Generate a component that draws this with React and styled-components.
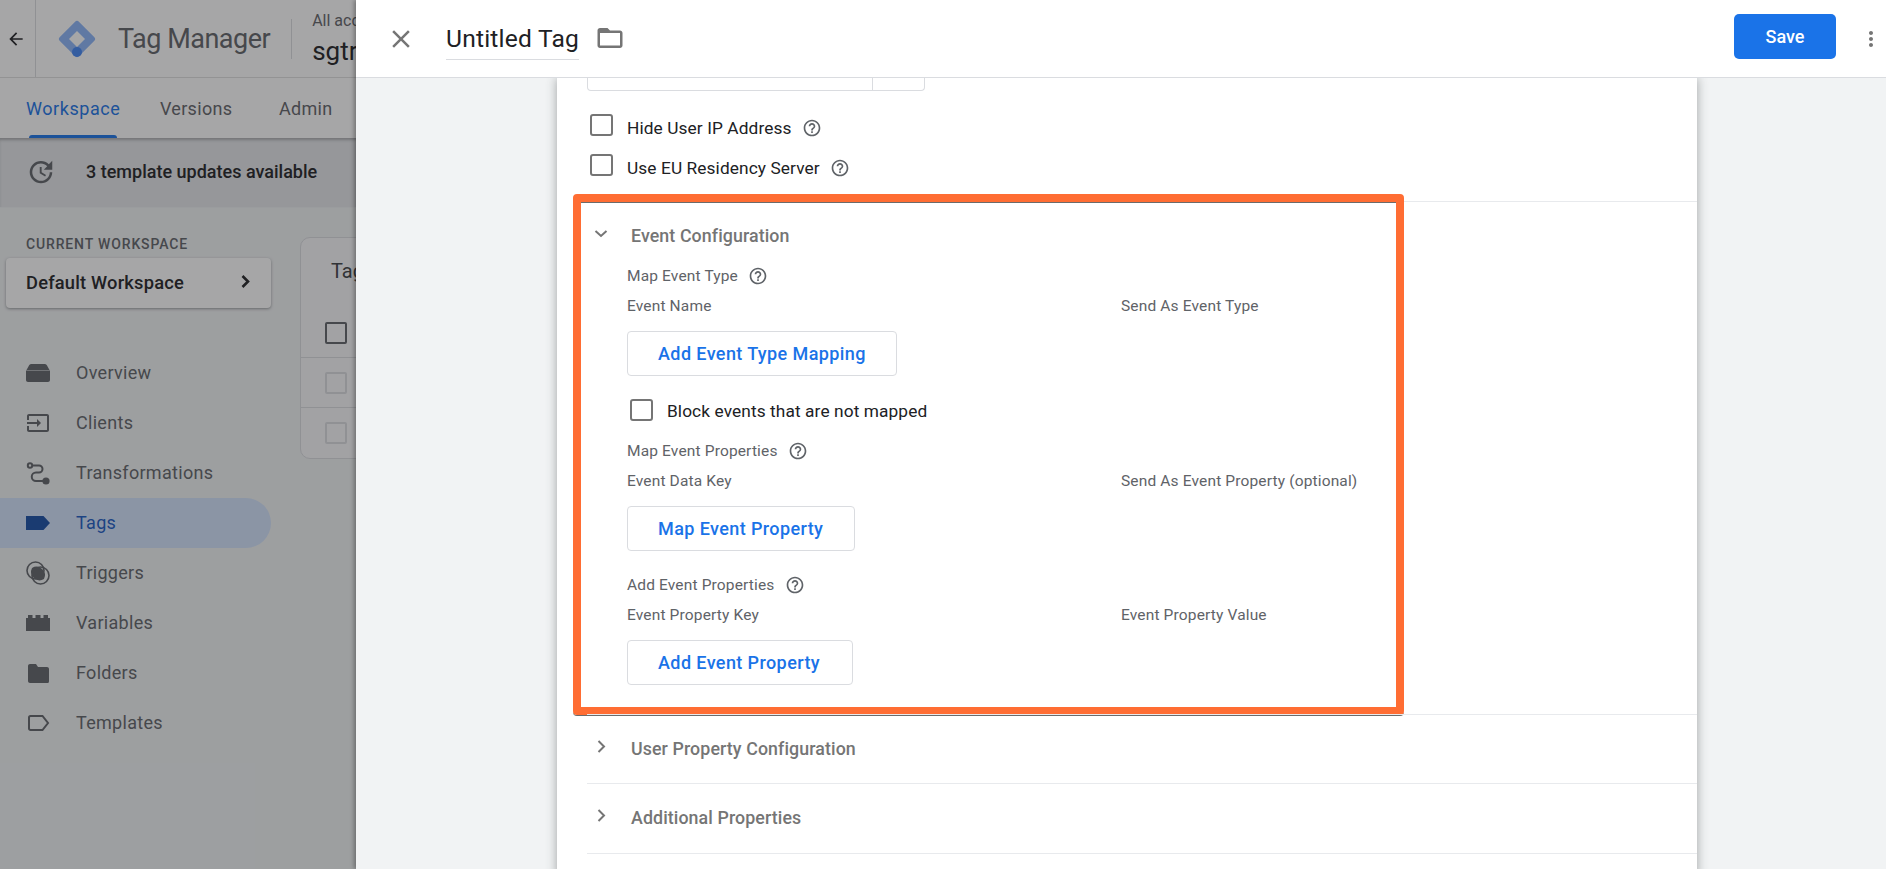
import React from "react";
import styled, { createGlobalStyle } from "styled-components";

const Global = createGlobalStyle`
  html, body { margin: 0; padding: 0; height: 100%; overflow: hidden; background: #fff; }
  body { font-family: Roboto, "Liberation Sans", sans-serif; color: #202124; }
  #root { height: 869px; }
  * { box-sizing: border-box; }
`;

const Shell = styled.div`
  display: flex;
  width: 1886px;
  height: 869px;
  overflow: hidden;
`;

/* ---------- background page ---------- */
const Page = styled.div`
  position: relative;
  flex: 0 0 356px;
  height: 869px;
  overflow: hidden;
  display: flex;
  flex-direction: column;
  background: #f1f3f4;
`;
const Scrim = styled.div`
  position: absolute;
  inset: 0;
  background: rgba(32, 33, 36, 0.4);
  z-index: 5;
`;
const AppBar = styled.div`
  flex: 0 0 78px;
  display: flex;
  align-items: center;
  background: #fff;
  border-bottom: 1px solid #e0e0e0;
  white-space: nowrap;
`;
const BackCell = styled.div`
  flex: 0 0 36px;
  height: 100%;
  display: flex;
  align-items: center;
  justify-content: center;
  border-right: 1px solid #dadce0;
  padding-right: 3px;
  color: #202124;
`;
const Logo = styled.svg`
  width: 38px;
  height: 38px;
  margin-left: 22px;
  flex: none;
`;
const Product = styled.div`
  margin-left: 22px;
  font-size: 27px;
  letter-spacing: -0.5px;
  color: #5f6368;
`;
const BarDivider = styled.div`
  flex: none;
  width: 1px;
  height: 40px;
  margin-left: 21px;
  background: #dadce0;
`;
const Crumbs = styled.div`
  margin-left: 20px;
  display: flex;
  flex-direction: column;
  gap: 6px;
`;
const CrumbTop = styled.div`
  font-size: 16px;
  line-height: 18px;
  color: #5f6368;
`;
const CrumbMain = styled.div`
  font-size: 26px;
  line-height: 30px;
  color: #202124;
`;
const Tabs = styled.div`
  flex: 0 0 60px;
  display: flex;
  align-items: stretch;
  padding-left: 26px;
  background: #fff;
  white-space: nowrap;
`;
const Tab = styled.div`
  position: relative;
  flex: 0 0 ${(p) => p.$w}px;
  display: flex;
  align-items: center;
  font-size: 18px;
  letter-spacing: ${(p) => (p.$active ? 0.55 : 0.3)}px;
  color: ${(p) => (p.$active ? "#1a73e8" : "#5f6368")};
  ${(p) =>
    p.$active &&
    `&::after { content: ""; position: absolute; left: 3px; width: 88px; bottom: 0; height: 3px; border-radius: 3px 3px 0 0; background: #1a73e8; }`}
`;
const Banner = styled.div`
  flex: 0 0 70px;
  display: flex;
  align-items: center;
  padding: 0 0 2px 26px;
  background: #e4e6e9;
  box-shadow: inset 0 3px 3px -1px rgba(60, 64, 67, 0.35);
  border-bottom: 1px solid #eceff1;
  font-size: 18px;
  font-weight: 500;
  color: #202124;
  white-space: nowrap;
  svg { color: #5f6368; margin-right: 30px; flex: none; }
`;
const Main = styled.div`
  flex: 1;
  display: flex;
  min-height: 0;
`;
const Side = styled.div`
  flex: 0 0 300px;
  display: flex;
  flex-direction: column;
  padding-top: 28px;
`;
const SideCaption = styled.div`
  padding-left: 26px;
  font-size: 14px;
  line-height: 16px;
  font-weight: 500;
  letter-spacing: 0.85px;
  color: #5f6368;
`;
const WorkspaceCard = styled.div`
  margin: 6px 29px 0 6px;
  height: 50px;
  display: flex;
  align-items: center;
  justify-content: space-between;
  padding: 0 16px 2px 20px;
  background: #fff;
  border-radius: 4px;
  box-shadow: 0 1px 3px rgba(60, 64, 67, 0.5);
  font-size: 18.3px;
  font-weight: 500;
  letter-spacing: 0.2px;
  color: #202124;
`;
const Nav = styled.div`
  margin-top: 40px;
  display: flex;
  flex-direction: column;
`;
const NavRow = styled.div`
  width: 271px;
  height: 50px;
  display: flex;
  align-items: center;
  padding: 0 0 1px 26px;
  font-size: 18px;
  letter-spacing: 0.3px;
  color: ${(p) => (p.$active ? "#1a5bc4" : "#5f6368")};
  background: ${(p) => (p.$active ? "#d2e3fc" : "transparent")};
  border-radius: ${(p) => (p.$active ? "0 25px 25px 0" : "0")};
  svg { flex: none; margin-right: 26px; color: ${(p) => (p.$active ? "#174ea6" : "#5f6368")}; }
`;
const TableCard = styled.div`
  flex: none;
  width: 400px;
  height: 222px;
  margin-top: 29px;
  background: #f8f9fa;
  border: 1px solid #dadce0;
  border-radius: 10px;
`;
const TableTitle = styled.div`
  height: 70px;
  padding: 20px 0 0 30px;
  font-size: 20px;
  line-height: 26px;
  color: #3c4043;
`;
const TableRow = styled.div`
  height: 50px;
  display: flex;
  align-items: center;
  padding-left: 24px;
  border-bottom: ${(p) => (p.$last ? "none" : "1px solid #dadce0")};
`;
const TableBox = styled.div`
  width: 22px;
  height: 22px;
  border-radius: 2px;
  border: 2px solid ${(p) => (p.$strong ? "#5f6368" : "#dadce0")};
`;

/* ---------- tag editor panel ---------- */
const Panel = styled.div`
  position: relative;
  z-index: 6;
  flex: 1;
  height: 869px;
  display: flex;
  flex-direction: column;
  background: #f1f3f4;
  box-shadow: -2px 0 4px rgba(0, 0, 0, 0.3);
`;
const PanelBar = styled.div`
  flex: 0 0 78px;
  display: flex;
  align-items: center;
  padding: 0 3px 0 30px;
  background: #fff;
  border-bottom: 1px solid #dadce0;
`;
const CloseBtn = styled.div`
  flex: none;
  display: flex;
  color: #757575;
`;
const NameField = styled.div`
  margin-left: 30px;
  height: 38px;
  padding-top: 1px;
  font-size: 24.6px;
  line-height: 32px;
  letter-spacing: 0.2px;
  color: #202124;
  border-bottom: 1px solid #dadce0;
  white-space: nowrap;
  margin-top: 5px;
`;
const FolderBtn = styled.div`
  flex: none;
  display: flex;
  margin-left: 16px;
  margin-top: -1px;
  color: #757575;
`;
const Spacer = styled.div`
  flex: 1;
`;
const SaveBtn = styled.div`
  width: 102px;
  height: 45px;
  display: flex;
  align-items: center;
  justify-content: center;
  background: #1a73e8;
  border-radius: 5px;
  color: #fff;
  font-size: 18px;
  font-weight: 500;
  margin-bottom: 5px;
`;
const MoreBtn = styled.div`
  flex: none;
  display: flex;
  margin-left: 23px;
  color: #757575;
`;
const PanelBody = styled.div`
  flex: 1;
  min-height: 0;
  overflow: hidden;
  padding-left: 201px;
`;
const Card = styled.div`
  width: 1140px;
  height: 800px;
  padding-left: 30px;
  background: #fff;
  box-shadow: 0 0 10px rgba(60, 64, 67, 0.45);
  display: flex;
  flex-direction: column;
`;
const FieldStub = styled.div`
  flex: none;
  display: flex;
  width: 338px;
  height: 13px;
  border: 1px solid #dadce0;
  border-top: none;
  border-radius: 0 0 4px 4px;
`;
const FieldStubDivider = styled.div`
  margin-left: 284px;
  width: 1px;
  background: #dadce0;
`;
const CheckRow = styled.div`
  display: flex;
  align-items: center;
  height: 40px;
  margin-left: ${(p) => p.$indent || 3}px;
  font-size: 17.3px;
  letter-spacing: 0.1px;
  color: #202124;
`;
const CheckBox = styled.div`
  flex: none;
  width: 23px;
  height: 22px;
  margin-right: 14px;
  border: 2px solid #757575;
  border-radius: 3px;
`;
const CheckText = styled.span`
  display: flex;
  align-items: center;
  padding-top: ${(p) => p.$drop || 0}px;
`;
const Help = styled.svg`
  flex: none;
  width: 20px;
  height: 20px;
  margin-left: ${(p) => p.$gap || 10}px;
  color: #5f6368;
`;
const Checks = styled.div`
  flex: none;
  margin-top: 14px;
  height: 96px;
  display: flex;
  flex-direction: column;
`;
const Section = styled.div`
  position: relative;
  flex: none;
  height: ${(p) => p.$h}px;
  border-top: 1px solid #e8eaed;
`;
const SectionHead = styled.div`
  display: flex;
  align-items: center;
  height: ${(p) => p.$h || 68}px;
  padding-bottom: 2px;
  font-size: 17.8px;
  font-weight: 500;
  letter-spacing: 0.1px;
  color: #757575;
  svg { flex: none; margin: -3px 20px 0 4px; color: #757575; }
`;
const SectionContent = styled.div`
  padding-left: 40px;
  margin-top: -6px;
  display: flex;
  flex-direction: column;
`;
const SubHead = styled.div`
  display: flex;
  align-items: center;
  height: 24px;
  font-size: 15.5px;
  letter-spacing: 0.15px;
  color: #5f6368;
`;
const Columns = styled.div`
  display: grid;
  grid-template-columns: 494px 1fr;
  height: 24px;
  margin-top: 6px;
  align-items: center;
  font-size: 15.5px;
  letter-spacing: 0.15px;
  color: #5f6368;
`;
const OutlineBtn = styled.div`
  align-self: flex-start;
  height: 45px;
  width: ${(p) => p.$w}px;
  margin-top: 13px;
  display: flex;
  align-items: center;
  padding-left: 30px;
  border: 1px solid #dadce0;
  border-radius: 4px;
  font-size: 18px;
  font-weight: 500;
  letter-spacing: 0.4px;
  color: #1a73e8;
  white-space: nowrap;
`;
const Gap = styled.div`
  height: ${(p) => p.$h}px;
  flex: none;
`;
const Highlight = styled.div`
  position: absolute;
  left: -14px;
  top: -8px;
  width: 831px;
  height: 521px;
  border: 8px solid #ff6d33;
  border-radius: 4px;
  box-shadow: 0 1px 0 #6b6b6b, inset 0 1px 0 #6b6b6b;
  pointer-events: none;
`;

const I = ({ d, s = 24 }) => (
  <svg width={s} height={s} viewBox="0 0 24 24" fill="currentColor">
    <path d={d} />
  </svg>
);

const HelpIcon = ({ gap }) => (
  <Help $gap={gap} viewBox="0 0 24 24" fill="currentColor">
    <path d="M11 18h2v-2h-2v2zm1-16C6.48 2 2 6.48 2 12s4.48 10 10 10 10-4.48 10-10S17.52 2 12 2zm0 18c-4.41 0-8-3.59-8-8s3.59-8 8-8 8 3.59 8 8-3.59 8-8 8zm0-14c-2.21 0-4 1.79-4 4h2c0-1.1.9-2 2-2s2 .9 2 2c0 2-3 1.75-3 5h2c0-2.25 3-2.5 3-5 0-2.21-1.79-4-4-4z" />
  </Help>
);

const ChevronDown = () => (
  <svg width="20" height="20" viewBox="0 0 20 20" fill="none" stroke="currentColor" strokeWidth="2">
    <path d="M4.500 7 10 12l5.500-5" />
  </svg>
);
const ChevronRight = ({ w = 2 }) => (
  <svg width="20" height="20" viewBox="0 0 20 20" fill="none" stroke="currentColor" strokeWidth={w}>
    <path d="M7.500 4 13 9.500 7.500 15" />
  </svg>
);

const navIcons = {
  overview: (
    <svg width="24" height="24" viewBox="0 0 24 24" fill="currentColor">
      <path d="M0.500 9 3 4.500C3.500 3.500 4.500 3 5.500 3h13c1 0 2 .5 2.500 1.500L23.500 9z M0 9.500h24V19c0 1.100-.9 2-2 2H2c-1.100 0-2-.9-2-2z" />
    </svg>
  ),
  clients: (
    <svg width="24" height="24" viewBox="0 0 24 24" fill="currentColor">
      <path d="M21 3H3C1.900 3 1 3.900 1 5v4h2V5h18v14H3v-4H1v4c0 1.100.9 2 2 2h18c1.100 0 2-.9 2-2V5c0-1.100-.9-2-2-2zM11 16l4-4-4-4v3H1v2h10z" />
    </svg>
  ),
  transformations: (
    <svg width="24" height="24" viewBox="0 0 24 24" fill="none" stroke="currentColor" strokeWidth="2">
      <circle cx="4" cy="4.500" r="2.200" />
      <circle cx="20" cy="20" r="2.600" fill="currentColor" />
      <path d="M6.500 4.500H13a3.500 3.500 0 0 1 0 7H10a3.800 3.800 0 0 0 0 8.500h8" />
    </svg>
  ),
  tags: (
    <svg width="24" height="24" viewBox="0 0 24 24" fill="currentColor">
      <path d="M0 5h17.500L24 12l-6.500 7H0z" />
    </svg>
  ),
  triggers: (
    <svg width="24" height="24" viewBox="0 0 24 24" fill="none" stroke="currentColor" strokeWidth="1.600">
      <circle cx="9.500" cy="9.500" r="8.500" />
      <circle cx="14.500" cy="14.500" r="8.500" />
      <path d="M6 7a8.500 8.500 0 0 1 12 11a8.500 8.500 0 0 1-12-11z" fill="currentColor" stroke="none" />
    </svg>
  ),
  variables: (
    <svg width="24" height="24" viewBox="0 0 24 24" fill="currentColor">
      <path d="M2 4h4.500v3h3V4h5v3h3V4H22v3h2v13H0V7h2z" />
    </svg>
  ),
  folders: (
    <svg width="24" height="24" viewBox="0 0 24 24" fill="currentColor">
      <path d="M10 3H4C2.900 3 2 3.900 2 5v15c0 1.100.9 2 2 2h18c.6 0 1-.9 1-2V8c0-1.100-.9-2-2-2h-9z" />
    </svg>
  ),
  templates: (
    <svg width="24" height="24" viewBox="0 0 24 24" fill="none" stroke="currentColor" strokeWidth="2">
      <path d="M3 6.500c0-.8.7-1.500 1.500-1.500H16.500l5.500 7-5.500 7H4.500c-.8 0-1.500-.7-1.500-1.500z" />
    </svg>
  ),
};

const navItems = [
  ["Overview", "overview"],
  ["Clients", "clients"],
  ["Transformations", "transformations"],
  ["Tags", "tags", true],
  ["Triggers", "triggers"],
  ["Variables", "variables"],
  ["Folders", "folders"],
  ["Templates", "templates"],
];

export default function App() {
  return (
    <Shell>
      <Global />
      <Page>
        <AppBar>
          <BackCell>
            <I s={20} d="M20 11H7.830l5.590-5.590L12 4l-8 8 8 8 1.410-1.410L7.830 13H20v-2z" />
          </BackCell>
          <Logo viewBox="0 0 38 38">
            <path d="M19 4 34 19 19 34 4 19z" fill="#8ab4f8" stroke="#8ab4f8" strokeWidth="6" strokeLinejoin="round" />
            <path d="M19 11 27 19 19 27 11 19z" fill="#fff" />
            <circle cx="19" cy="32" r="5" fill="#4285f4" />
          </Logo>
          <Product>Tag Manager</Product>
          <BarDivider />
          <Crumbs>
            <CrumbTop>All accounts</CrumbTop>
            <CrumbMain>sgtr-server</CrumbMain>
          </Crumbs>
        </AppBar>
        <Tabs>
          <Tab $active $w={134}>Workspace</Tab>
          <Tab $w={119}>Versions</Tab>
          <Tab $w={60}>Admin</Tab>
        </Tabs>
        <Banner>
          <I s={30} d="M21 10.120h-6.780l2.740-2.820c-2.730-2.700-7.150-2.800-9.880-.1-2.730 2.710-2.730 7.080 0 9.790s7.150 2.710 9.880 0C18.320 15.650 19 14.080 19 12.100h2c0 1.980-.88 4.550-2.640 6.290-3.510 3.480-9.210 3.480-12.720 0-3.500-3.470-3.530-9.110-.02-12.580s9.140-3.470 12.650 0L21 3v7.120zM12.500 8v4.250l3.500 2.080-.72 1.210L11 13V8h1.500z" />
          3 template updates available
        </Banner>
        <Main>
          <Side>
            <SideCaption>CURRENT WORKSPACE</SideCaption>
            <WorkspaceCard>
              Default Workspace
              <ChevronRight w={2.6} />
            </WorkspaceCard>
            <Nav>
              {navItems.map(([label, key, active]) => (
                <NavRow key={key} $active={active}>
                  {navIcons[key]}
                  {label}
                </NavRow>
              ))}
            </Nav>
          </Side>
          <TableCard>
            <TableTitle>Tags</TableTitle>
            <TableRow><TableBox $strong /></TableRow>
            <TableRow><TableBox /></TableRow>
            <TableRow $last><TableBox /></TableRow>
          </TableCard>
        </Main>
        <Scrim />
      </Page>
      <Panel>
        <PanelBar>
          <CloseBtn>
            <I s={30} d="M19 6.410 17.590 5 12 10.590 6.410 5 5 6.410 10.590 12 5 17.590 6.410 19 12 13.410 17.590 19 19 17.590 13.410 12z" />
          </CloseBtn>
          <NameField>Untitled Tag</NameField>
          <FolderBtn>
            <I s={30} d="M20 6h-8l-2-2H4c-1.100 0-1.990.9-1.990 2L2 18c0 1.100.9 2 2 2h16c1.100 0 2-.9 2-2V8c0-1.100-.9-2-2-2zm0 12H4V8h16v10z" />
          </FolderBtn>
          <Spacer />
          <SaveBtn>Save</SaveBtn>
          <MoreBtn>
            <I s={24} d="M12 8c1.100 0 2-.9 2-2s-.9-2-2-2-2 .9-2 2 .9 2 2 2zm0 2c-1.100 0-2 .9-2 2s.9 2 2 2 2-.9 2-2-.9-2-2-2zm0 6c-1.100 0-2 .9-2 2s.9 2 2 2 2-.9 2-2-.9-2-2-2z" />
          </MoreBtn>
        </PanelBar>
        <PanelBody>
          <Card>
            <FieldStub><FieldStubDivider /></FieldStub>
            <Checks>
              <CheckRow>
                <CheckBox />
                <CheckText $drop={5}>Hide User IP Address<HelpIcon /></CheckText>
              </CheckRow>
              <CheckRow>
                <CheckBox />
                <CheckText $drop={5}>Use EU Residency Server<HelpIcon /></CheckText>
              </CheckRow>
            </Checks>
            <Section $h={513}>
              <SectionHead>
                <ChevronDown />
                Event Configuration
              </SectionHead>
              <SectionContent>
                <SubHead>Map Event Type<HelpIcon /></SubHead>
                <Columns>
                  <span>Event Name</span>
                  <span>Send As Event Type</span>
                </Columns>
                <OutlineBtn $w={270}>Add Event Type Mapping</OutlineBtn>
                <Gap $h={14} />
                <CheckRow $indent={3}>
                  <CheckBox />
                  <CheckText $drop={1}>Block events that are not mapped</CheckText>
                </CheckRow>
                <Gap $h={9} />
                <SubHead>Map Event Properties<HelpIcon /></SubHead>
                <Columns>
                  <span>Event Data Key</span>
                  <span>Send As Event Property (optional)</span>
                </Columns>
                <OutlineBtn $w={228}>Map Event Property</OutlineBtn>
                <Gap $h={22} />
                <SubHead>Add Event Properties<HelpIcon /></SubHead>
                <Columns>
                  <span>Event Property Key</span>
                  <span>Event Property Value</span>
                </Columns>
                <OutlineBtn $w={226}>Add Event Property</OutlineBtn>
              </SectionContent>
              <Highlight />
            </Section>
            <Section $h={69}>
              <SectionHead>
                <ChevronRight />
                User Property Configuration
              </SectionHead>
            </Section>
            <Section $h={70}>
              <SectionHead $h={69}>
                <ChevronRight />
                Additional Properties
              </SectionHead>
            </Section>
            <Section $h={20} />
          </Card>
        </PanelBody>
      </Panel>
    </Shell>
  );
}
